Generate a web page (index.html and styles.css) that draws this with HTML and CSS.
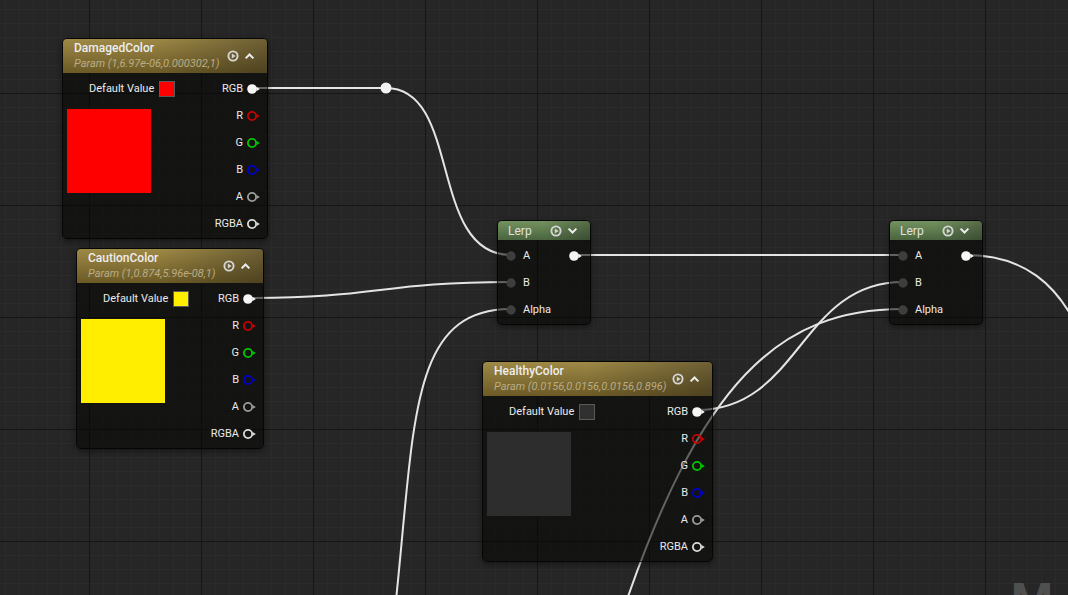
FILE: index.html
```html
<!DOCTYPE html>
<html lang="en">
<head>
    <meta charset="UTF-8">
    <title>Material Graph</title>
    <link rel="stylesheet" href="styles.css">
</head>
<body>
    <svg class="defs" width="0" height="0">
        <symbol id="pin-full" viewBox="0 0 14 14">
            <circle cx="6" cy="7" r="4.8" fill="currentColor"/>
            <polygon points="10.4,4.7 13.8,7 10.4,9.3" fill="currentColor"/>
        </symbol>
        <symbol id="pin-ring" viewBox="0 0 14 14">
            <circle cx="6" cy="7" r="4.1" fill="none" stroke="currentColor" stroke-width="1.8"/>
            <polygon points="10.6,4.9 13.8,7 10.6,9.1" fill="currentColor"/>
        </symbol>
        <symbol id="pin-in" viewBox="0 0 10 14">
            <circle cx="5" cy="7" r="4.7" fill="currentColor"/>
        </symbol>
        <symbol id="ico-play" viewBox="0 0 12 12">
            <circle cx="6" cy="6" r="4.6" fill="none" stroke="currentColor" stroke-width="1.9"/>
            <polygon points="4.8,3.6 8.6,6 4.8,8.4" fill="currentColor"/>
        </symbol>
        <symbol id="ico-up" viewBox="0 0 11 11">
            <polyline points="1.6,7.4 5.5,3.5 9.4,7.4" fill="none" stroke="currentColor" stroke-width="2"/>
        </symbol>
        <symbol id="ico-down" viewBox="0 0 11 11">
            <polyline points="1.6,3.6 5.5,7.5 9.4,3.6" fill="none" stroke="currentColor" stroke-width="2"/>
        </symbol>
    </svg>

    <div class="graph">
        <!-- ワイヤー (ノードの下に描く) -->
        <svg class="wires" width="1068" height="595" viewBox="0 0 1068 595">
            <path d="M252 88 L386 88"/>
            <path d="M386 88 C462 88 428 255 511 255"/>
            <path d="M247 298 C380 298 380 282 511 282"/>
            <path d="M396 600 C415 420 410 309 511 309"/>
            <path d="M574 255 L903 255"/>
            <path d="M697 410 C800 410 800 282 903 282"/>
            <path d="M620 620 C700 380 780 309 903 309"/>
            <path d="M966 255 C1020 255 1060 280 1085 345"/>
            <circle class="knot" cx="386" cy="88" r="5.5"/>
        </svg>

        <!-- DamagedColor -->
        <div class="node param n-damaged">
            <div class="node-head">
                <div class="head-text">
                    <div class="node-title">DamagedColor</div>
                    <div class="node-sub">Param (1,6.97e-06,0.000302,1)</div>
                </div>
                <div class="head-icons">
                    <svg class="ico-play"><use href="#ico-play"/></svg>
                    <svg class="ico-chev"><use href="#ico-up"/></svg>
                </div>
            </div>
            <div class="node-body">
                <div class="param-left">
                    <div class="default-row">Default Value <span class="swatch red"></span></div>
                    <div class="preview red"></div>
                </div>
                <div class="out-pins">
                    <div class="pin-row">RGB <svg class="pin white"><use href="#pin-full"/></svg></div>
                    <div class="pin-row">R <svg class="pin c-r"><use href="#pin-ring"/></svg></div>
                    <div class="pin-row">G <svg class="pin c-g"><use href="#pin-ring"/></svg></div>
                    <div class="pin-row">B <svg class="pin c-b"><use href="#pin-ring"/></svg></div>
                    <div class="pin-row">A <svg class="pin c-a"><use href="#pin-ring"/></svg></div>
                    <div class="pin-row">RGBA <svg class="pin c-rgba"><use href="#pin-ring"/></svg></div>
                </div>
            </div>
        </div>

        <!-- CautionColor -->
        <div class="node param n-caution">
            <div class="node-head">
                <div class="head-text">
                    <div class="node-title">CautionColor</div>
                    <div class="node-sub">Param (1,0.874,5.96e-08,1)</div>
                </div>
                <div class="head-icons">
                    <svg class="ico-play"><use href="#ico-play"/></svg>
                    <svg class="ico-chev"><use href="#ico-up"/></svg>
                </div>
            </div>
            <div class="node-body">
                <div class="param-left">
                    <div class="default-row">Default Value <span class="swatch yellow"></span></div>
                    <div class="preview yellow"></div>
                </div>
                <div class="out-pins">
                    <div class="pin-row">RGB <svg class="pin white"><use href="#pin-full"/></svg></div>
                    <div class="pin-row">R <svg class="pin c-r"><use href="#pin-ring"/></svg></div>
                    <div class="pin-row">G <svg class="pin c-g"><use href="#pin-ring"/></svg></div>
                    <div class="pin-row">B <svg class="pin c-b"><use href="#pin-ring"/></svg></div>
                    <div class="pin-row">A <svg class="pin c-a"><use href="#pin-ring"/></svg></div>
                    <div class="pin-row">RGBA <svg class="pin c-rgba"><use href="#pin-ring"/></svg></div>
                </div>
            </div>
        </div>

        <!-- HealthyColor -->
        <div class="node param n-healthy">
            <div class="node-head">
                <div class="head-text">
                    <div class="node-title">HealthyColor</div>
                    <div class="node-sub">Param (0.0156,0.0156,0.0156,0.896)</div>
                </div>
                <div class="head-icons">
                    <svg class="ico-play"><use href="#ico-play"/></svg>
                    <svg class="ico-chev"><use href="#ico-up"/></svg>
                </div>
            </div>
            <div class="node-body">
                <div class="param-left">
                    <div class="default-row">Default Value <span class="swatch dark"></span></div>
                    <div class="preview dark"></div>
                </div>
                <div class="out-pins">
                    <div class="pin-row">RGB <svg class="pin white"><use href="#pin-full"/></svg></div>
                    <div class="pin-row">R <svg class="pin c-r"><use href="#pin-ring"/></svg></div>
                    <div class="pin-row">G <svg class="pin c-g"><use href="#pin-ring"/></svg></div>
                    <div class="pin-row">B <svg class="pin c-b"><use href="#pin-ring"/></svg></div>
                    <div class="pin-row">A <svg class="pin c-a"><use href="#pin-ring"/></svg></div>
                    <div class="pin-row">RGBA <svg class="pin c-rgba"><use href="#pin-ring"/></svg></div>
                </div>
            </div>
        </div>

        <!-- Lerp 1 -->
        <div class="node lerp n-lerp1">
            <div class="node-head">
                <div class="node-title">Lerp</div>
                <div class="head-icons">
                    <svg class="ico-play"><use href="#ico-play"/></svg>
                    <svg class="ico-chev"><use href="#ico-down"/></svg>
                </div>
            </div>
            <div class="node-body">
                <div class="in-pins">
                    <div class="pin-row"><svg class="pin-in"><use href="#pin-in"/></svg>A</div>
                    <div class="pin-row"><svg class="pin-in"><use href="#pin-in"/></svg>B</div>
                    <div class="pin-row"><svg class="pin-in"><use href="#pin-in"/></svg>Alpha</div>
                </div>
                <div class="out-pins">
                    <div class="pin-row"><svg class="pin white"><use href="#pin-full"/></svg></div>
                </div>
            </div>
        </div>

        <!-- Lerp 2 -->
        <div class="node lerp n-lerp2">
            <div class="node-head">
                <div class="node-title">Lerp</div>
                <div class="head-icons">
                    <svg class="ico-play"><use href="#ico-play"/></svg>
                    <svg class="ico-chev"><use href="#ico-down"/></svg>
                </div>
            </div>
            <div class="node-body">
                <div class="in-pins">
                    <div class="pin-row"><svg class="pin-in"><use href="#pin-in"/></svg>A</div>
                    <div class="pin-row"><svg class="pin-in"><use href="#pin-in"/></svg>B</div>
                    <div class="pin-row"><svg class="pin-in"><use href="#pin-in"/></svg>Alpha</div>
                </div>
                <div class="out-pins">
                    <div class="pin-row"><svg class="pin white"><use href="#pin-full"/></svg></div>
                </div>
            </div>
        </div>

        <div class="watermark">M</div>
    </div>
</body>
</html>
```

FILE: styles.css
```css
:root {
    --canvas: #262626;
    --grid-minor: #2b2b2b;
    --grid-major: #161616;
    --wire: #e4e4e4;
    --text: #eaeaea;
}

body {
    margin: 0;
    font-family: Roboto, 'Liberation Sans', sans-serif;
    color: var(--text);
    background: var(--canvas);
}

.defs {
    position: absolute;
    width: 0;
    height: 0;
}

.graph {
    position: relative;
    width: 1068px;
    height: 595px;
    overflow: hidden;
    background-color: var(--canvas);
    background-image:
        linear-gradient(to right, var(--grid-major) 1px, transparent 1px),
        linear-gradient(to bottom, var(--grid-major) 1px, transparent 1px),
        linear-gradient(to right, var(--grid-minor) 1px, transparent 1px),
        linear-gradient(to bottom, var(--grid-minor) 1px, transparent 1px);
    background-size: 112px 112px, 112px 112px, 14px 14px, 14px 14px;
    background-position: 89px 93px;
}

.wires {
    position: absolute;
    left: 0;
    top: 0;
}

.wires path {
    fill: none;
    stroke: var(--wire);
    stroke-width: 2;
}

.knot {
    fill: #f2f2f2;
}

/* ノード */
.node {
    position: absolute;
    border: 1px solid rgba(0,0,0,0.85);
    border-radius: 5px;
    overflow: hidden;
    box-shadow: 0 2px 6px rgba(0,0,0,0.45);
    font-size: 11px;
}

.n-damaged { left: 62px; top: 38px; width: 204px; }
.n-caution { left: 76px; top: 248px; width: 186px; }
.n-healthy { left: 482px; top: 361px; width: 229px; }
.n-lerp1 { left: 497px; top: 220px; width: 92px; }
.n-lerp2 { left: 889px; top: 220px; width: 92px; }

.node-head {
    display: flex;
    align-items: center;
    justify-content: space-between;
    padding: 0 12px 0 11px;
}

.param .node-head {
    height: 34px;
    align-items: flex-start;
    background:
        linear-gradient(to right, rgba(0,0,0,0) 45%, rgba(20,20,20,0.35)),
        linear-gradient(to bottom, #9e8946, #6c5a26);
}

.lerp .node-head {
    height: 19px;
    padding-left: 10px;
    background:
        linear-gradient(to right, rgba(0,0,0,0) 50%, rgba(20,20,20,0.3)),
        linear-gradient(to bottom, #73925f, #4a653f);
}

.head-text {
    padding-top: 2px;
}

.node-title {
    font-size: 12px;
    line-height: 14px;
    font-weight: 500;
    color: #eeeeee;
}

.lerp .node-title {
    font-weight: 400;
    color: #e0e0e0;
}

.node-sub {
    margin-top: 2px;
    line-height: 14px;
    font-style: italic;
    color: #b9ac86;
    white-space: nowrap;
}

.head-icons {
    display: flex;
    align-items: center;
    gap: 5px;
    color: #ececec;
}

.param .head-icons {
    height: 34px;
}

.ico-play {
    width: 12px;
    height: 12px;
    color: #d6d6d6;
}

.ico-chev {
    width: 11px;
    height: 11px;
}

.node-body {
    display: flex;
    justify-content: space-between;
    padding: 2px 0 0;
    background: rgba(6,7,4,0.58);
}

.param .node-body {
    padding-bottom: 1px;
}

.lerp .node-body {
    padding-bottom: 1px;
}

.pin-row {
    height: 27px;
    display: flex;
    align-items: center;
    gap: 3px;
    white-space: nowrap;
}

.out-pins {
    padding-right: 7px;
}

.out-pins .pin-row {
    justify-content: flex-end;
}

.lerp .out-pins {
    padding-right: 8px;
}

.in-pins {
    padding-left: 8px;
}

.in-pins .pin-row {
    gap: 7px;
}

.pin {
    width: 14px;
    height: 14px;
}

.pin-in {
    width: 10px;
    height: 14px;
    color: #3e3e3e;
}

.white { color: #f6f6f6; }
.c-r { color: #c80000; }
.c-g { color: #00c800; }
.c-b { color: #0000cc; }
.c-a { color: #9c9c9c; }
.c-rgba { color: #dadada; }

/* パラメータの左側 */
.param-left {
    padding-left: 4px;
}

.default-row {
    height: 27px;
    display: flex;
    align-items: center;
    gap: 5px;
    padding-left: 22px;
    white-space: nowrap;
}

.swatch {
    width: 14px;
    height: 14px;
    border: 1px solid #5a5a5a;
}

.preview {
    width: 84px;
    height: 84px;
    margin-top: 7px;
}

.red { background: #ff0000; }
.yellow { background: #ffee00; }
.dark { background: #2d2d2d; }
.swatch.dark { background: #303030; }

.watermark {
    position: absolute;
    left: 1011px;
    top: 577px;
    font-size: 48px;
    line-height: 1;
    font-weight: 700;
    color: #4f4f4f;
}
```
